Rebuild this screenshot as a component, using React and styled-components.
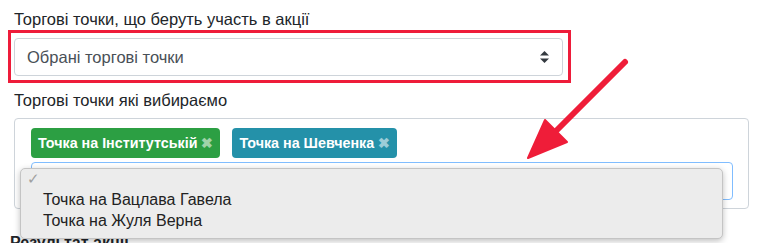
import React from "react"
import styled, { createGlobalStyle } from "styled-components"

const GlobalStyle = createGlobalStyle`
    body {
        margin: 0;
        background: #fff;
        font-family: "Liberation Sans", Arial, sans-serif;
        color: #212529;
    }
`

const App = () => {
    return (
        <Page>
            <GlobalStyle />
            <Label first>Торгові точки, що беруть участь в акції</Label>
            <Highlight>
                <Select>
                    <span>Обрані торгові точки</span>
                    <svg width="9" height="12" viewBox="0 0 9 12">
                        <path d="M4.5 0 L9 4.5 L0 4.5 Z" fill="#343a40" />
                        <path d="M4.5 12 L9 7.5 L0 7.5 Z" fill="#343a40" />
                    </svg>
                </Select>
            </Highlight>

            <Label>Торгові точки які вибираємо</Label>
            <MultiBox>
                <TagRow>
                    <Tag color="#2c9f43">Точка на Інститутській <Remove>✖</Remove></Tag>
                    <Tag color="#2491a9">Точка на Шевченка <Remove>✖</Remove></Tag>
                </TagRow>
                <SearchInput>
                    <Dropdown>
                        <Check>✓</Check>
                        <Options>
                            <Option>Точка на Вацлава Гавела</Option>
                            <Option>Точка на Жуля Верна</Option>
                        </Options>
                    </Dropdown>
                </SearchInput>
            </MultiBox>

            <Heading>Результат акції</Heading>

            <Pointer width="120" height="120" viewBox="0 0 120 120">
                <line x1="107" y1="14" x2="38" y2="83" stroke="#ef1d39" strokeWidth="6" strokeLinecap="round" />
                <path d="M10 110 L27 72 L49 94 Z" fill="#ef1d39" stroke="#ef1d39" strokeWidth="2" strokeLinejoin="round" />
            </Pointer>
        </Page>
    )
}

export default App

const Page = styled.div`
    position: relative;
    width: 770px;
    height: 243px;
    overflow: hidden;
    padding: 0 21px 0 14px;
    box-sizing: border-box;
`

const Label = styled.div`
    font-size: 16.5px;
    line-height: 22px;
    margin-top: ${props => props.first ? "8px" : "6px"};
    margin-bottom: ${props => props.first ? "0" : "7px"};
`

const Highlight = styled.div`
    margin-left: -6px;
    width: 563px;
    box-sizing: border-box;
    border: 3px solid #ee1c3a;
    padding: 5px 5px 4px 3px;
`

const Select = styled.div`
    height: 38px;
    box-sizing: border-box;
    border: 1px solid #ced4da;
    border-radius: 4px;
    padding: 0 13px 0 12px;
    display: flex;
    align-items: center;
    justify-content: space-between;
    font-size: 16.5px;
    color: #495057;
`

const MultiBox = styled.div`
    border: 1px solid #ced4da;
    border-radius: 4px;
    padding: 9px 15px 8px 16px;
`

const TagRow = styled.div`
    display: flex;
    gap: 12px;
    margin-bottom: 4px;
`

const Tag = styled.div`
    height: 30px;
    display: flex;
    align-items: center;
    gap: 4px;
    padding: 0 7px 0 7px;
    border-radius: 4px;
    background: ${props => props.color};
    color: #fff;
    font-size: 14.3px;
    font-weight: 700;
`

const Remove = styled.span`
    font-size: 14px;
    opacity: 0.55;
`

const SearchInput = styled.div`
    position: relative;
    height: 38px;
    box-sizing: border-box;
    border: 1px solid #80bdff;
    border-radius: 4px;
`

const Dropdown = styled.div`
    position: absolute;
    left: -12px;
    top: 5px;
    width: 703px;
    height: 71px;
    box-sizing: border-box;
    background: #ececec;
    border: 1px solid #c4c4c4;
    border-radius: 5px;
    box-shadow: 0 2px 6px rgba(0, 0, 0, 0.25);
    padding: 20px 0 0 22px;
    z-index: 2;
`

const Check = styled.div`
    position: absolute;
    left: 6px;
    top: 1px;
    font-size: 15px;
    color: #a0a0a0;
`

const Options = styled.div`
    display: flex;
    flex-direction: column;
`

const Option = styled.div`
    font-size: 16px;
    line-height: 21px;
    color: #222;
`

const Heading = styled.div`
    margin: 22px 0 0 -4px;
    font-size: 16px;
    font-weight: 700;
    line-height: 24px;
`

const Pointer = styled.svg`
    position: absolute;
    left: 518px;
    top: 48px;
    z-index: 3;
`
